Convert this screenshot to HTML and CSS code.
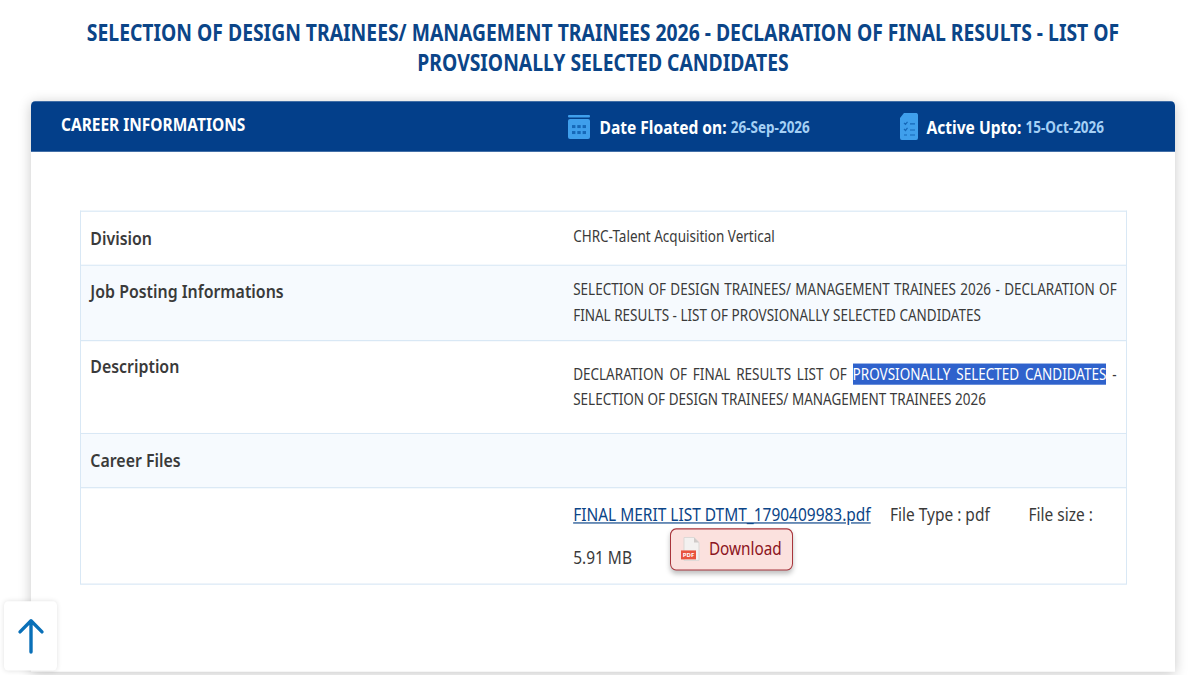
FILE: index.html
```html
<!DOCTYPE html>
<html lang="en">
<head>
  <meta charset="utf-8" />
  <meta name="viewport" content="width=device-width, initial-scale=1" />
  <title>Career Informations</title>
  <link rel="stylesheet" href="styles.css">
</head>
<body>
  <div class="page">
    <h1 class="page-title">SELECTION OF DESIGN TRAINEES/ MANAGEMENT TRAINEES 2026 - DECLARATION OF FINAL RESULTS - LIST OF PROVSIONALLY SELECTED CANDIDATES</h1>

    <div class="card">
      <div class="card-head">
        <div class="card-title">CAREER INFORMATIONS</div>
        <div class="head-item head-floated">
          <svg class="head-icon" width="24" height="22" viewBox="0 0 24 26" preserveAspectRatio="none">
            <rect x="1" y="5" width="22" height="20" rx="2" fill="#3f9fec"/>
            <rect x="1" y="1" width="22" height="2.5" rx="1" fill="#3f9fec"/>
            <g fill="#1668b8">
              <rect x="5" y="11" width="3.4" height="3"/><rect x="10.3" y="11" width="3.4" height="3"/><rect x="15.6" y="11" width="3.4" height="3"/>
              <rect x="5" y="17" width="3.4" height="3"/><rect x="10.3" y="17" width="3.4" height="3"/><rect x="15.6" y="17" width="3.4" height="3"/>
            </g>
          </svg>
          <span class="head-label">Date Floated on:</span>
          <span class="head-date">26-Sep-2026</span>
        </div>
        <div class="head-item head-active">
          <svg class="head-icon" width="18" height="23" viewBox="0 0 18 27" preserveAspectRatio="none">
            <path d="M4 0h12a2 2 0 0 1 2 2v23a2 2 0 0 1-2 2H2a2 2 0 0 1-2-2V5z" fill="#3f9fec"/>
            <g stroke="#1668b8" stroke-width="1.2" fill="none">
              <path d="M4 10l1.5 1.5L7.5 9M10 11h5M4 16l1.5 1.5L7.5 15M10 17h5M4 22h3M10 22h5"/>
            </g>
          </svg>
          <span class="head-label">Active Upto:</span>
          <span class="head-date">15-Oct-2026</span>
        </div>
      </div>

      <div class="info-table">
        <div class="row row-division">
          <div class="row-name">Division</div>
          <div class="row-value">CHRC-Talent Acquisition Vertical</div>
        </div>
        <div class="row row-shaded row-posting">
          <div class="row-name">Job Posting Informations</div>
          <div class="row-value">SELECTION OF DESIGN TRAINEES/ MANAGEMENT TRAINEES 2026 - DECLARATION OF FINAL RESULTS - LIST OF PROVSIONALLY SELECTED CANDIDATES</div>
        </div>
        <div class="row row-description">
          <div class="row-name">Description</div>
          <div class="row-value"><span>DECLARATION OF FINAL RESULTS LIST OF</span> <span class="selected">PROVSIONALLY SELECTED CANDIDATES</span> <span>-</span> <span>SELECTION OF DESIGN TRAINEES/ MANAGEMENT TRAINEES 2026</span></div>
        </div>
        <div class="row row-shaded row-files-head">
          <div class="row-name">Career Files</div>
          <div class="row-value"></div>
        </div>
        <div class="row row-files">
          <div class="row-name"></div>
          <div class="row-value file-value">
            <a class="file-link" href="#">FINAL MERIT LIST DTMT_1790409983.pdf</a>
            <span class="file-type">File Type : pdf</span>
            <span class="file-size">File size :</span>
            <span class="file-mb">5.91 MB</span>
            <a class="download" href="#">
              <svg width="20" height="22" viewBox="0 0 20 26" preserveAspectRatio="none">
                <path d="M4 1h10l5 5v18H4z" fill="#f3f1f0" stroke="#dcd8d6"/>
                <path d="M14 1v5h5z" fill="#cfcac8"/>
                <rect x="1" y="14" width="15" height="9" fill="#e8543f"/>
                <text x="8.5" y="21" class="pdf-mark">PDF</text>
              </svg>
              Download
            </a>
          </div>
        </div>
      </div>
    </div>

    <a class="to-top" href="#">
      <svg width="28" height="31" viewBox="0 0 28 36" preserveAspectRatio="none">
        <path d="M14 3v31M3 14L14 3l11 11" fill="none" stroke="#0a70b8" stroke-width="3.4" stroke-linecap="round" stroke-linejoin="round"/>
      </svg>
    </a>
  </div>
</body>
</html>
```

FILE: styles.css
```css
html, body {
  height: 675px;
  overflow: hidden;
}
body {
  font-family: "Noto Sans", sans-serif;
  background: #fff;
  margin: 0;
  color: #3a3a3a;
}
/* the design's text is tall and narrow, so the page is laid out short and stretched down */
.page {
  position: relative;
  width: 1200px;
  height: 573.75px;
  transform: scaleY(1.1765);
  transform-origin: 0 0;
}
.page-title {
  margin: 0 0 0 73px;
  padding: 16.15px 0 0;
  width: 1060px;
  height: 85.85px;
  box-sizing: border-box;
  text-align: center;
  font-size: 19.34px;
  line-height: 24.65px;
  font-weight: 700;
  color: #0b4588;
}
.card {
  margin: 0 25px 0 31px;
  height: 485.35px;
  background: #fff;
  border-radius: 4px 4px 0 0;
  box-shadow: 0 1.7px 12px rgba(0, 0, 0, 0.22);
}
.card-head {
  display: flex;
  align-items: center;
  height: 43.35px;
  padding-left: 30px;
  background: #033f8a;
  border-radius: 4px 4px 0 0;
  color: #fff;
}
.card-title {
  width: 506px;
  font-size: 15.47px;
  font-weight: 700;
  margin-top: -4.25px;
}
.head-item {
  display: flex;
  align-items: center;
  font-weight: 700;
}
.head-floated {
  width: 333px;
}
.head-icon {
  margin-right: 8.5px;
}
.head-label {
  font-size: 15.56px;
  margin-right: 4.25px;
}
.head-date {
  font-size: 13.5px;
  color: #a5d0f5;
  margin-top: 0.85px;
}
.info-table {
  margin: 50.15px 48px 0 49px;
  border: 1px solid #d9e8f5;
  border-bottom: 0;
}
.row {
  display: grid;
  grid-template-columns: 482.8px 1fr;
  border-bottom: 1px solid #d9e8f5;
  padding: 0 9.35px;
  box-sizing: border-box;
}
.row-shaded {
  background: #f6fafe;
}
.row-division { height: 45.9px; }
.row-posting { height: 63.75px; }
.row-description { height: 79.05px; }
.row-files-head { height: 45.9px; }
.row-files { height: 81.6px; }
.row-name {
  font-size: 15.9px;
  font-weight: 600;
  line-height: 21.25px;
  padding-top: 11.9px;
  color: #3a3a3a;
}
.row-posting .row-name,
.row-description .row-name {
  padding-top: 11.05px;
}
.row-value {
  font-size: 13.5px;
  line-height: 21.25px;
  padding-top: 10.2px;
  text-align: justify;
}
.row-description .row-value { padding-top: 17.85px; }
.selected {
  background: #2f62cc;
  color: #fff;
}
.file-value {
  position: relative;
  font-size: 15.47px;
  line-height: 36.55px;
  padding-top: 4.25px;
  text-align: left;
}
.file-link {
  color: #0b4588;
}
.file-type {
  margin-left: 15.3px;
}
.file-size {
  margin-left: 34.85px;
}
.file-mb {
  display: block;
  margin-top: -0.85px;
}
.download {
  position: absolute;
  left: 96.9px;
  top: 34px;
  display: flex;
  align-items: center;
  gap: 8.5px;
  box-sizing: border-box;
  width: 123.25px;
  height: 35.7px;
  padding-left: 9.35px;
  background: #fbe1de;
  border: 1px solid #a8353c;
  border-radius: 6px;
  box-shadow: 0 2.5px 5px rgba(0, 0, 0, 0.25);
  color: #8c1421;
  font-size: 15.3px;
  line-height: 1;
  text-decoration: none;
}
.pdf-mark {
  font-size: 6px;
  font-weight: 700;
  fill: #fff;
  text-anchor: middle;
}
.to-top {
  position: absolute;
  left: 4px;
  top: 510.85px;
  width: 53px;
  height: 59.5px;
  display: flex;
  align-items: center;
  justify-content: center;
  background: #fff;
  border-radius: 4px;
  box-shadow: 0 0 5px rgba(0, 0, 0, 0.12);
}
```
